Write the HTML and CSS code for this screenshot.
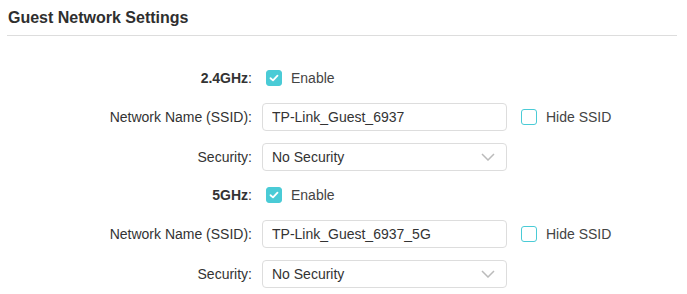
FILE: index.html
```html
<!DOCTYPE html>
<html lang="en">
  <head>
    <meta charset="UTF-8" />
    <title>Guest Network Settings</title>
    <link rel="stylesheet" href="styles.css">
  </head>
  <body>
    <div class="panel">
      <h3 class="panel-title">Guest Network Settings</h3>

      <form class="settings">
        <!-- 2.4GHz -->
        <div class="group">
          <div class="row row-check">
            <div class="label"><b>2.4GHz</b>:</div>
            <label class="check enable">
              <span class="box checked">
                <svg width="10" height="8" viewBox="0 0 10 8"><polyline points="1.5,4.2 4,6.4 8.5,1.6" fill="none" stroke="#fff" stroke-width="1.8" stroke-linecap="round" stroke-linejoin="round"/></svg>
              </span>
              Enable
            </label>
          </div>
          <div class="row">
            <div class="label">Network Name (SSID):</div>
            <input class="text-input" type="text" value="TP-Link_Guest_6937" />
            <label class="check hide-ssid">
              <span class="box"></span>
              Hide SSID
            </label>
          </div>
          <div class="row">
            <div class="label">Security:</div>
            <div class="select">
              <span>No Security</span>
              <svg width="14" height="8" viewBox="0 0 14 8"><polyline points="1,1 7,7 13,1" fill="none" stroke="#bbb" stroke-width="1.5"/></svg>
            </div>
          </div>
        </div>

        <!-- 5GHz -->
        <div class="group">
          <div class="row row-check">
            <div class="label"><b>5GHz</b>:</div>
            <label class="check enable">
              <span class="box checked">
                <svg width="10" height="8" viewBox="0 0 10 8"><polyline points="1.5,4.2 4,6.4 8.5,1.6" fill="none" stroke="#fff" stroke-width="1.8" stroke-linecap="round" stroke-linejoin="round"/></svg>
              </span>
              Enable
            </label>
          </div>
          <div class="row">
            <div class="label">Network Name (SSID):</div>
            <input class="text-input" type="text" value="TP-Link_Guest_6937_5G" />
            <label class="check hide-ssid">
              <span class="box"></span>
              Hide SSID
            </label>
          </div>
          <div class="row">
            <div class="label">Security:</div>
            <div class="select">
              <span>No Security</span>
              <svg width="14" height="8" viewBox="0 0 14 8"><polyline points="1,1 7,7 13,1" fill="none" stroke="#bbb" stroke-width="1.5"/></svg>
            </div>
          </div>
        </div>
      </form>
    </div>
  </body>
</html>
```

FILE: styles.css
```css
body {
  margin: 0;
  background-color: #fff;
  font-family: "Liberation Sans", Arial, sans-serif;
  font-size: 14px;
  color: #333;
}
.panel {
  padding: 0 10px 0 7px;
}
.panel-title {
  margin: 0;
  padding: 9px 1px 8px;
  font-size: 16px;
  line-height: 18px;
  font-weight: bold;
  color: #2f2f2f;
  border-bottom: 1px solid #ddd;
}
.settings {
  padding-top: 29px;
}
.group {
  display: flex;
  flex-direction: column;
  gap: 12px;
  margin-bottom: 11px;
}
.row {
  display: flex;
  align-items: center;
  height: 28px;
}
.row-check {
  height: 26px;
}
.label {
  width: 245px;
  padding-right: 10px;
  text-align: right;
  flex-shrink: 0;
}
.label b {
  font-weight: bold;
}
.check {
  display: flex;
  align-items: center;
  gap: 9px;
  color: #444;
  cursor: pointer;
}
.enable {
  margin-left: 4px;
}
.box {
  width: 16px;
  height: 16px;
  box-sizing: border-box;
  border: 1px solid #4acbd6;
  border-radius: 3px;
  background-color: #fff;
  display: flex;
  align-items: center;
  justify-content: center;
}
.box.checked {
  background-color: #4acbd6;
}
.hide-ssid {
  margin-left: 14px;
}
.text-input,
.select {
  width: 245px;
  height: 28px;
  box-sizing: border-box;
  border: 1px solid #ddd;
  border-radius: 4px;
  padding: 0 11px 0 9px;
  font-family: inherit;
  font-size: 14px;
  color: #333;
  background-color: #fff;
  outline: none;
}
.select {
  display: flex;
  align-items: center;
  justify-content: space-between;
}
```
